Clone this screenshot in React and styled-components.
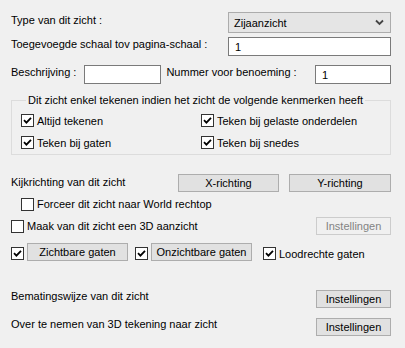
import React, { useState } from 'react';
import styled, { createGlobalStyle } from 'styled-components';

const Global = createGlobalStyle`
  html, body { margin: 0; padding: 0; background: #f0f0f0; }
  body { font-family: "Liberation Sans", Arial, sans-serif; font-size: 11px; color: #000; }
`;

const Page = styled.div`
  width: 405px;
  height: 348px;
  box-sizing: border-box;
  padding: 12px 14px 0 11px;
  background: #f0f0f0;
  display: flex;
  flex-direction: column;
`;

const Row = styled.div`
  display: flex;
  align-items: center;
  height: ${p => p.h || 19}px;
  margin-top: ${p => p.mt || 0}px;
  padding-left: ${p => p.indent || 0}px;
`;

const Label = styled.span`
  white-space: nowrap;
  margin-top: ${p => p.up ? -p.up : 0}px;
`;

const Spacer = styled.div`
  flex: 1;
`;

const Select = styled.div`
  width: 163px;
  height: 21px;
  box-sizing: border-box;
  border: 1px solid #acacac;
  background: #e5e5e5;
  display: flex;
  align-items: center;
  padding: 0 6px 0 5px;
  svg { margin-left: auto; }
`;

const Input = styled.input`
  width: ${p => p.w}px;
  height: 19px;
  box-sizing: border-box;
  border: 1px solid #7a7a7a;
  background: #fff;
  font: inherit;
  padding: 0 6px;
  margin-left: ${p => p.ml || 0}px;
  outline: none;
`;

const Button = styled.div`
  width: ${p => p.w}px;
  height: 18px;
  box-sizing: border-box;
  border: 1px solid ${p => p.disabled ? '#cccccc' : '#adadad'};
  background: ${p => p.disabled ? '#f0f0f0' : '#e1e1e1'};
  color: ${p => p.disabled ? '#838383' : '#000'};
  display: flex;
  align-items: center;
  justify-content: center;
  margin-left: ${p => p.ml || 0}px;
  white-space: nowrap;
`;

const Group = styled.fieldset`
  margin: 10px 0 0 0;
  padding: 8px 0 5px 9px;
  border: 1px solid #dcdcdc;
  border-radius: 0;
  min-width: 0;
  legend {
    padding: 0 2px;
    margin-left: 5px;
    line-height: 12px;
    white-space: nowrap;
  }
`;

const CheckGrid = styled.div`
  display: grid;
  grid-template-columns: 180px 1fr;
  row-gap: 9px;
`;

const CheckWrap = styled.label`
  display: flex;
  align-items: center;
  gap: 3px;
  white-space: nowrap;
  margin-left: ${p => p.ml || 0}px;
  margin-top: ${p => p.low ? 3 : 0}px;
  cursor: default;
`;

const Box = styled.span`
  width: 13px;
  height: 13px;
  box-sizing: border-box;
  border: 1px solid #333;
  background: #fff;
  display: flex;
  align-items: center;
  justify-content: center;
  flex-shrink: 0;
`;

const Check = ({ checked: init, label, ml, low }) => {
  const [checked, setChecked] = useState(init);
  return (
    <CheckWrap ml={ml} low={low} onClick={() => setChecked(!checked)}>
      <Box>
        {checked && (
          <svg width="9" height="9" viewBox="0 0 9 9">
            <path d="M1 4.2 L3.4 6.6 L8 1.8" stroke="#000" strokeWidth="1.8" fill="none" />
          </svg>
        )}
      </Box>
      {label && <span>{label}</span>}
    </CheckWrap>
  );
};

const App = () => (
  <>
    <Global />
    <Page>
      <Row h={21}>
        <Label up={5}>Type van dit zicht :</Label>
        <Spacer />
        <Select>
          Zijaanzicht
          <svg width="9" height="7" viewBox="0 0 9 7">
            <path d="M1 1.5 L4.5 5 L8 1.5" stroke="#444" strokeWidth="1.8" fill="none" />
          </svg>
        </Select>
      </Row>
      <Row mt={4}>
        <Label up={5}>Toegevoegde schaal tov pagina-schaal :</Label>
        <Spacer />
        <Input w={163} defaultValue="1" />
      </Row>
      <Row mt={9}>
        <Label up={5}>Beschrijving :</Label>
        <Input w={77} ml={8} />
        <Label up={5} style={{ marginLeft: 5 }}>Nummer voor benoeming :</Label>
        <Spacer />
        <Input w={76} defaultValue="1" />
      </Row>
      <Group>
        <legend>Dit zicht enkel tekenen indien het zicht de volgende kenmerken heeft</legend>
        <CheckGrid>
          <Check checked label="Altijd tekenen" />
          <Check checked label="Teken bij gelaste onderdelen" />
          <Check checked label="Teken bij gaten" />
          <Check checked label="Teken bij snedes" />
        </CheckGrid>
      </Group>
      <Row h={18} mt={19}>
        <Label up={3}>Kijkrichting van dit zicht</Label>
        <Spacer />
        <Button w={101}>X-richting</Button>
        <Button w={102} ml={10}>Y-richting</Button>
      </Row>
      <Row h={14} mt={5} indent={10}>
        <Check label="Forceer dit zicht naar World rechtop" />
      </Row>
      <Row h={18} mt={6}>
        <Check label="Maak van dit zicht een 3D aanzicht" />
        <Spacer />
        <Button w={75} disabled>Instellingen</Button>
      </Row>
      <Row h={18} mt={8}>
        <Check checked low />
        <Button w={101} ml={3}>Zichtbare gaten</Button>
        <Check checked low ml={7} />
        <Button w={101} ml={3}>Onzichtbare gaten</Button>
        <Check checked low ml={11} label="Loodrechte gaten" />
      </Row>
      <Row h={17} mt={29}>
        <Label up={5}>Bematingswijze van dit zicht</Label>
        <Spacer />
        <Button w={75}>Instellingen</Button>
      </Row>
      <Row h={17} mt={11}>
        <Label up={5}>Over te nemen van 3D tekening naar zicht</Label>
        <Spacer />
        <Button w={75}>Instellingen</Button>
      </Row>
    </Page>
  </>
);

export default App;
